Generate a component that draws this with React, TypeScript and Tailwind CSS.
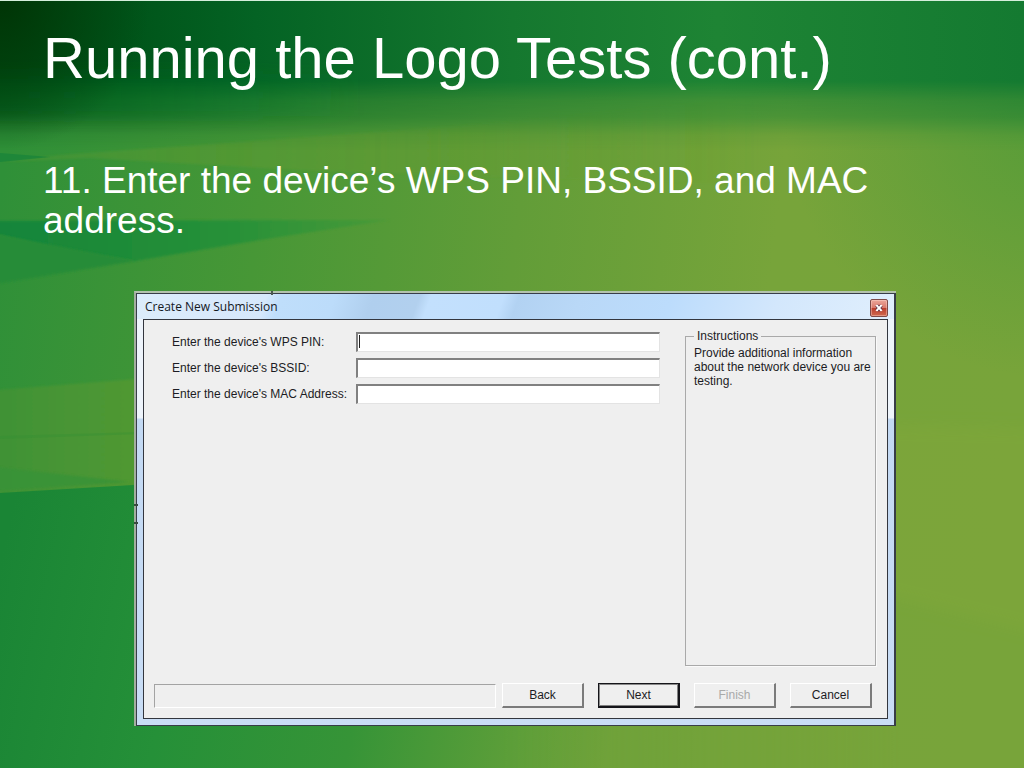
import type { ReactNode } from "react";

function Backdrop() {
  return (
    <svg
      className="absolute inset-0 -z-10 h-full w-full"
      viewBox="0 0 1024 768"
      preserveAspectRatio="none"
      aria-hidden="true"
    >
      <defs>
        <linearGradient id="base" gradientUnits="userSpaceOnUse" x1="0" y1="200" x2="1024" y2="330">
          <stop offset="0" stopColor="#2f9038" />
          <stop offset="0.25" stopColor="#479736" />
          <stop offset="0.5" stopColor="#629d38" />
          <stop offset="0.75" stopColor="#77a43a" />
          <stop offset="1" stopColor="#78a43a" />
        </linearGradient>
        <linearGradient id="upperLight" gradientUnits="userSpaceOnUse" x1="0" y1="0" x2="760" y2="0">
          <stop offset="0" stopColor="#6a9c30" stopOpacity="0.25" />
          <stop offset="0.5" stopColor="#6a9c30" stopOpacity="0.4" />
          <stop offset="1" stopColor="#6a9c30" stopOpacity="0" />
        </linearGradient>
        <linearGradient id="mid" x1="0" x2="1" y1="0" y2="0">
          <stop offset="0" stopColor="#3f9235" />
          <stop offset="0.25" stopColor="#559a33" />
          <stop offset="1" stopColor="#78a43a" stopOpacity="0" />
        </linearGradient>
        <linearGradient id="lower" gradientUnits="userSpaceOnUse" x1="0" y1="560" x2="620" y2="700">
          <stop offset="0" stopColor="#1a8535" />
          <stop offset="0.3" stopColor="#259038" />
          <stop offset="0.6" stopColor="#369437" />
          <stop offset="0.85" stopColor="#5c9e39" />
          <stop offset="1" stopColor="#70a23a" />
        </linearGradient>
        <linearGradient id="lowerFade" gradientUnits="userSpaceOnUse" x1="500" y1="0" x2="900" y2="0">
          <stop offset="0" stopColor="#fff" />
          <stop offset="1" stopColor="#000" />
        </linearGradient>
        <mask id="lowerMask">
          <rect width="1024" height="768" fill="url(#lowerFade)" />
        </mask>
        <linearGradient id="top" x1="0" x2="1" y1="0" y2="0">
          <stop offset="0" stopColor="#004a12" />
          <stop offset="0.12" stopColor="#005419" />
          <stop offset="0.25" stopColor="#046324" />
          <stop offset="0.5" stopColor="#15782f" />
          <stop offset="0.7" stopColor="#1e8434" />
          <stop offset="1" stopColor="#147a31" />
        </linearGradient>
        <linearGradient id="topFade" gradientUnits="userSpaceOnUse" x1="0" y1="0" x2="0" y2="150">
          <stop offset="0" stopColor="#fff" />
          <stop offset="0.54" stopColor="#fff" />
          <stop offset="0.67" stopColor="#999" />
          <stop offset="0.78" stopColor="#777" />
          <stop offset="0.9" stopColor="#1c1c1c" />
          <stop offset="1" stopColor="#000" />
        </linearGradient>
        <mask id="topMask">
          <rect width="1024" height="150" fill="url(#topFade)" />
        </mask>
        <linearGradient id="sideDark" x1="0" x2="1" y1="0" y2="0">
          <stop offset="0" stopColor="#00561c" stopOpacity="0.8" />
          <stop offset="1" stopColor="#1a8535" stopOpacity="0" />
        </linearGradient>
        <radialGradient id="rightEdge" gradientUnits="userSpaceOnUse" cx="1060" cy="100" r="280">
          <stop offset="0" stopColor="#3d9637" stopOpacity="0.6" />
          <stop offset="1" stopColor="#3d9637" stopOpacity="0" />
        </radialGradient>
        <radialGradient id="corner" gradientUnits="userSpaceOnUse" cx="0" cy="0" r="150">
          <stop offset="0" stopColor="#003204" stopOpacity="0.9" />
          <stop offset="1" stopColor="#003a0a" stopOpacity="0" />
        </radialGradient>
        <linearGradient id="shard" x1="0" x2="1" y1="0" y2="0">
          <stop offset="0" stopColor="#16853a" />
          <stop offset="0.6" stopColor="#279139" />
          <stop offset="1" stopColor="#4a9a37" />
        </linearGradient>
        <filter id="soft" x="-50%" y="-60%" width="200%" height="220%">
          <feGaussianBlur stdDeviation="7" />
        </filter>
        <filter id="edge">
          <feGaussianBlur stdDeviation="0.8" />
        </filter>
      </defs>
      <rect width="1024" height="768" fill="url(#base)" />
      <path d="M0 162 L60 155 L380 132 L512 122 L760 96 L760 185 L300 170 L90 158 Z" fill="url(#upperLight)" filter="url(#edge)" />
      <path d="M0 153 L50 157 L0 162 Z" fill="#17833a" opacity="0.7" />
      <path d="M-4 221 L390 220 L260 240 L135 261 L60 250 L-4 234 Z" fill="url(#shard)" filter="url(#edge)" />
      <path d="M-4 234 L135 261 L-4 284 Z" fill="#258c37" filter="url(#edge)" />
      <path d="M-4 390 L150 378 L700 330 L700 490 L150 485 L-4 494 Z" fill="url(#mid)" filter="url(#edge)" />
      <path d="M0 436 L140 432 L140 434 L0 439 Z" fill="#338f35" opacity="0.35" />
      <path d="M-4 467 L130 482 L-4 491 Z" fill="#389337" opacity="0.8" filter="url(#edge)" />
      <g mask="url(#lowerMask)">
        <path d="M0 493 L150 484 L420 470 L1024 440 L1024 768 L0 768 Z" fill="url(#lower)" />
      </g>
      <path d="M860 424 L1060 428 L1060 640 L860 590 Z" fill="#84a93b" opacity="0.35" filter="url(#soft)" />
      <rect x="760" width="264" height="400" fill="url(#rightEdge)" />
      <g mask="url(#topMask)">
        <rect width="1024" height="150" fill="url(#top)" />
      </g>
      <rect x="-20" y="74" width="380" height="42" fill="url(#sideDark)" filter="url(#soft)" />
      <rect width="160" height="160" fill="url(#corner)" />
      <rect width="1024" height="1" fill="#d5efdc" />
    </svg>
  );
}

function Field({ id, label, caret = false }: { id: string; label: string; caret?: boolean }) {
  return (
    <div className="flex items-center">
      <label htmlFor={id} className="w-[184px] shrink-0 whitespace-nowrap">
        {label}
      </label>
      <div className="relative flex grow">
        <input
          id={id}
          type="text"
          className="h-5 w-full min-w-0 border-t-2 border-r border-b border-l-2 border-t-[#808080] border-r-[#e3e3e3] border-b-[#e3e3e3] border-l-[#808080] bg-white px-1 outline-none"
        />
        {caret && <span className="absolute top-[3px] left-[3px] h-[13px] w-px bg-[#222]" />}
      </div>
    </div>
  );
}

function DialogButton({
  children,
  primary = false,
  disabled = false,
}: {
  children: ReactNode;
  primary?: boolean;
  disabled?: boolean;
}) {
  return (
    <button
      type="button"
      disabled={disabled}
      className={
        primary
          ? "h-[25px] w-[82px] border border-r-2 border-b-2 border-[#15151a] bg-[#efefef] shadow-[inset_1px_1px_0_#8a8a8a,inset_-1px_-1px_0_#808080]"
          : "h-[25px] w-[82px] border border-r-2 border-b-2 border-t-white border-r-[#7b7b7b] border-b-[#7b7b7b] border-l-white bg-[#efefef] disabled:text-[#a9a9a9]"
      }
    >
      {children}
    </button>
  );
}

function SubmissionDialog() {
  return (
    <section
      role="dialog"
      aria-labelledby="dialog-title"
      className="relative border-t-2 border-l-2 border-t-[#b3c2ad] border-l-[#a3ae9f] font-['Liberation_Sans',Arial,sans-serif] text-[12px] leading-[14px] text-[#1c1c24]"
    >
      <span className="absolute -top-0.5 left-[135px] h-1 w-0.5 bg-[#4c5a50]" />
      <span className="absolute top-[211px] -left-0.5 h-0.5 w-1 bg-[#3a4a40]" />
      <span className="absolute top-[229px] -left-0.5 h-0.5 w-1 bg-[#3a4a40]" />
      <div className="border border-r-2 border-[#383d48] bg-[linear-gradient(180deg,#eef4fb_0px,#eef4fb_124px,#c3d9f3_125px,#c9ddf5_100%)] px-1.5 pb-1.5">
        <header className="-mx-1.5 flex h-[25px] items-center justify-between bg-[linear-gradient(110deg,#dcecfb_0%,#d6e8fb_17%,#bfdefb_19%,#bcdcfa_26%,#b0cfee_31%,#b2d0ee_37%,#c3e0fd_38.5%,#c1dffd_48%,#b2d2f2_50%,#b9d8f7_58%,#bcdcfc_70%,#d3e7fc_84%,#e0effd_100%)] pr-1.5 pl-2">
          <h2
            id="dialog-title"
            className="font-['Open_Sans','Noto_Sans',sans-serif] text-[12px] leading-4 text-[#14181e]"
          >
            Create New Submission
          </h2>
          <button
            type="button"
            aria-label="Close"
            className="mt-0.5 flex h-[18px] w-[18px] items-center justify-center rounded-xs border border-[#7d4a48] bg-[linear-gradient(180deg,#eba79b_0%,#d9796b_48%,#bb3d2c_52%,#cf6a50_100%)] shadow-[inset_0_0_0_1px_rgba(255,220,210,0.4)]"
          >
            <svg width="8" height="8" viewBox="0 0 8 8" aria-hidden="true">
              <path d="M1.6 1.4 L6.4 6.6 M6.4 1.4 L1.6 6.6" stroke="#5d3a50" strokeWidth="3.6" />
              <path d="M1.6 1.4 L6.4 6.6 M6.4 1.4 L1.6 6.6" stroke="#fff" strokeWidth="1.9" />
              <path d="M0.8 1.4 H3 M5 1.4 H7.2 M0.8 6.6 H3 M5 6.6 H7.2" stroke="#fff" strokeWidth="1" />
            </svg>
          </button>
        </header>
        <form className="border border-[#33363e] bg-[#efefef]" onSubmit={(e) => e.preventDefault()}>
          <div className="flex min-h-[346px] gap-[25px] pt-[9px] pr-[11px] pl-7">
            <div className="flex grow flex-col gap-1.5 pt-[3px]">
              <Field id="pin" label="Enter the device's WPS PIN:" caret />
              <Field id="bssid" label="Enter the device's BSSID:" />
              <Field id="mac" label="Enter the device's MAC Address:" />
            </div>
            <fieldset className="w-[191px] shrink-0 border border-[#a9a9a9] px-2 shadow-[1px_1px_0_#fafafa]">
              <legend className="px-[3px]">Instructions</legend>
              <p className="-mr-1 pt-[3px]">
                Provide additional information about the network device you are testing.
              </p>
            </fieldset>
          </div>
          <footer className="flex items-center pt-[17px] pr-[15px] pb-2.5 pl-2.5">
            <output className="mr-1.5 h-6 grow border border-t-[#a3a3a3] border-r-white border-b-white border-l-[#a3a3a3]" />
            <div className="flex gap-3.5">
              <DialogButton>Back</DialogButton>
              <DialogButton primary>Next</DialogButton>
              <DialogButton disabled>Finish</DialogButton>
              <DialogButton>Cancel</DialogButton>
            </div>
          </footer>
        </form>
      </div>
    </section>
  );
}

export default function App() {
  return (
    <main className="relative isolate min-h-screen overflow-hidden font-['Liberation_Sans',Arial,sans-serif]">
      <Backdrop />
      <div className="px-[43px] pt-6">
        <h1 className="text-[58px] leading-[68px] text-white">Running the Logo Tests (cont.)</h1>
        <p className="pt-[69px] text-[37px] leading-10 text-white">
          11. Enter the device’s WPS PIN, BSSID, and MAC address.
        </p>
      </div>
      <div className="pt-[50px] pr-32 pb-10 pl-[134px]">
        <SubmissionDialog />
      </div>
    </main>
  );
}
